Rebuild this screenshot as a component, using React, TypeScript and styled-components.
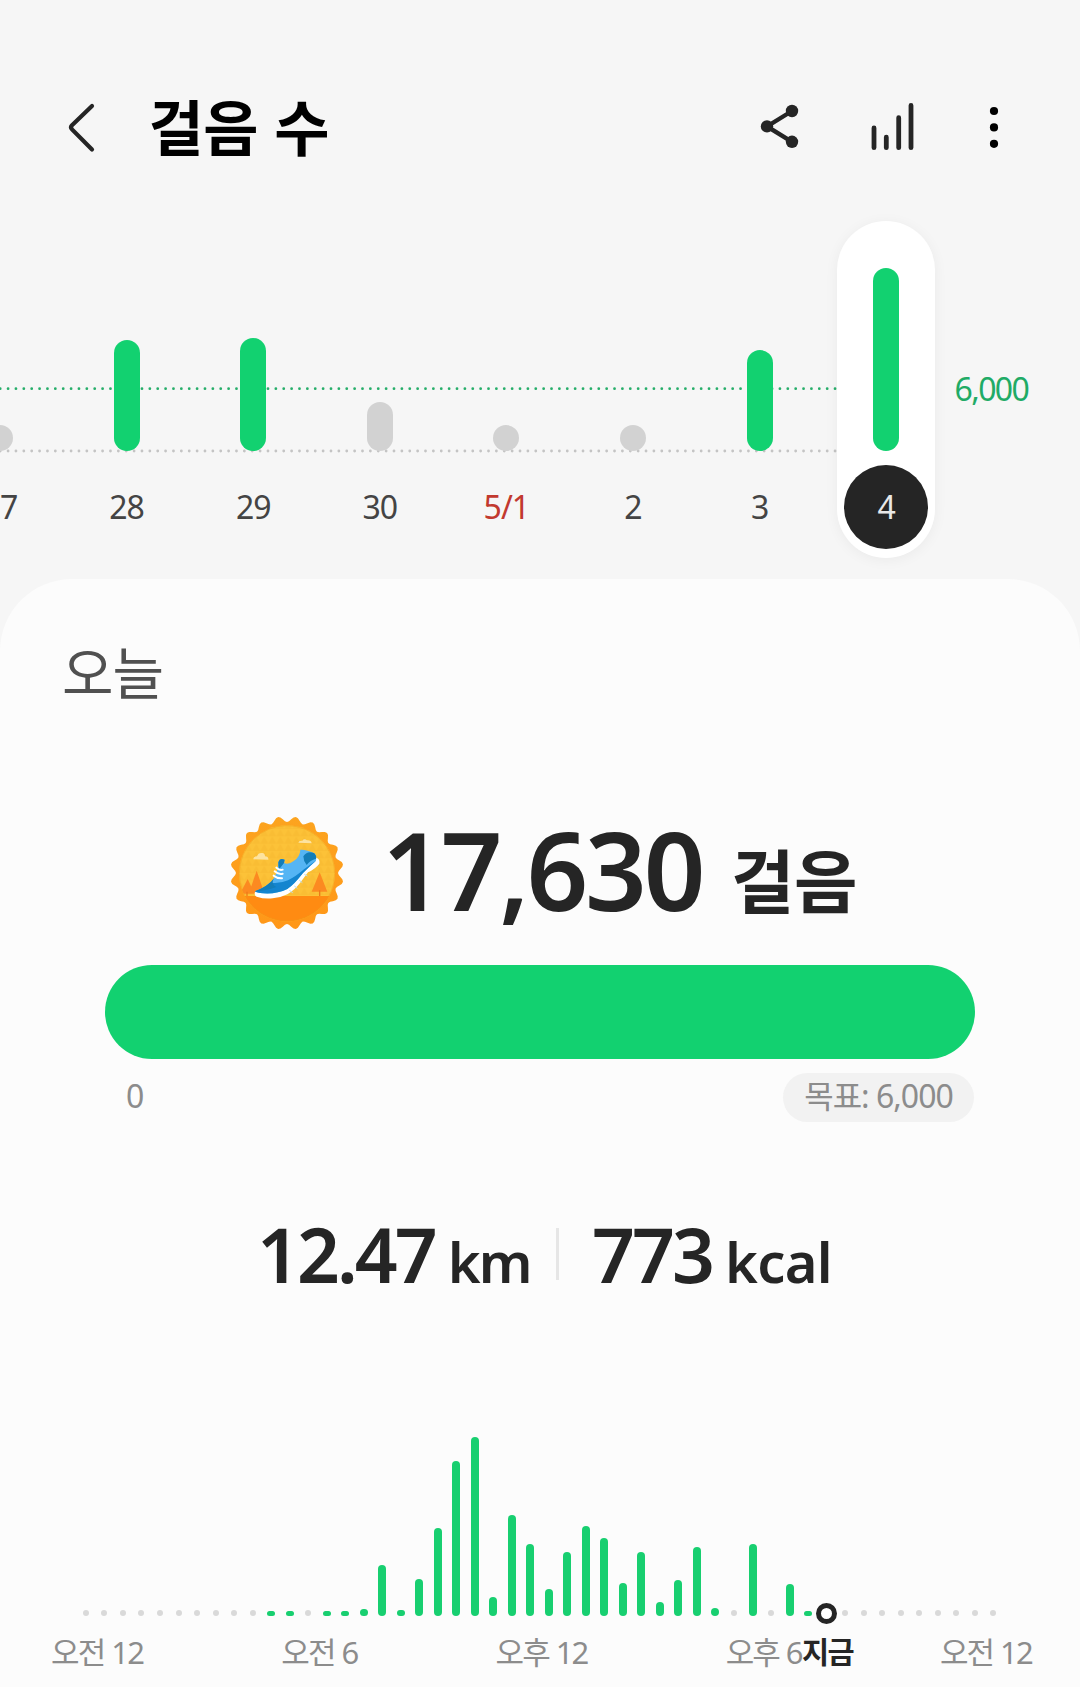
import React from "react";
import styled, { createGlobalStyle } from "styled-components";

const green = "#12d170";
const ink = "#252525";

const GlobalStyle = createGlobalStyle`
  html, body { margin: 0; padding: 0; background: #f6f6f6; }
  * { box-sizing: border-box; }
  body { font-family: "Noto Sans", "Noto Sans CJK KR", sans-serif; color: ${ink}; }
`;

const Screen = styled.main`
  width: 1080px;
  height: 1687px;
  overflow: hidden;
  display: flex;
  flex-direction: column;
  background: #f6f6f6;
`;

const Header = styled.header`
  height: 221px;
  flex: none;
  padding: 91px 64.5px 0 64px;
  display: flex;
  align-items: flex-start;
`;

const IconButton = styled.button<{ $width: number }>`
  width: ${(p) => p.$width}px;
  height: 72px;
  padding: 0;
  border: 0;
  background: none;
  display: flex;
  align-items: center;
  justify-content: center;
`;

const Title = styled.h1`
  margin: -2px auto 0 47.5px;
  font-family: "Noto Sans CJK KR", sans-serif;
  font-size: 60px;
  line-height: 72px;
  font-weight: 700;
  letter-spacing: -0.5px;
  color: #000;
`;

const Actions = styled.div`
  display: flex;
  gap: 54px;
`;

const WeekChart = styled.section`
  position: relative;
  height: 358px;
  flex: none;
  display: flex;
  margin-left: -63.3px;
`;

const GuideLines = styled.svg`
  position: absolute;
  left: 63.3px;
  top: 0;
`;

const Day = styled.div`
  position: relative;
  width: 126.6px;
  flex: none;
  display: flex;
  flex-direction: column;
  align-items: center;
`;

const DayPill = styled.div<{ $selected: boolean }>`
  width: 97.5px;
  height: 337px;
  border-radius: 49px;
  display: flex;
  flex-direction: column;
  align-items: center;
  background: ${(p) => (p.$selected ? "#fff" : "transparent")};
  box-shadow: ${(p) => (p.$selected ? "0 2px 14px rgba(0, 0, 0, 0.05)" : "none")};
`;

const BarSlot = styled.div`
  height: 230px;
  display: flex;
  align-items: flex-end;
`;

const DayBar = styled.div<{ $height: number; $reached: boolean }>`
  width: 26px;
  height: ${(p) => p.$height}px;
  border-radius: 13px;
  background: ${(p) => (p.$reached ? green : "#d2d2d2")};
`;

const DayLabel = styled.span<{ $tone: string; $selected: boolean }>`
  width: 84px;
  height: 84px;
  margin-top: 14px;
  padding-bottom: 2px;
  border-radius: 50%;
  display: flex;
  align-items: center;
  justify-content: center;
  font-size: 32px;
  letter-spacing: -1px;
  color: ${(p) => p.$tone};
  background: ${(p) => (p.$selected ? ink : "transparent")};
`;

const GoalValue = styled.span`
  margin: 145px 0 0 5px;
  height: 46px;
  line-height: 46px;
  font-size: 32px;
  letter-spacing: -1.6px;
  color: #1fab66;
`;

const Card = styled.section`
  flex: 1;
  display: flex;
  flex-direction: column;
  background: #fcfcfc;
  border-radius: 72px 72px 0 0;
`;

const Today = styled.h2`
  margin: 53px 0 0 62px;
  height: 76px;
  font-family: "Noto Sans CJK KR", sans-serif;
  font-size: 56px;
  line-height: 76px;
  font-weight: 400;
  letter-spacing: -1px;
  color: #505050;
`;

const StepSummary = styled.div`
  height: 150px;
  margin: 90px 0 0 229px;
  display: flex;
  align-items: center;
`;

const StepCount = styled.strong`
  margin: -7px 0 0 37px;
  width: 349px;
  font-size: 108px;
  line-height: 150px;
  font-weight: 600;
  letter-spacing: -3.1px;
`;

const StepUnit = styled.span`
  padding-top: 10px;
  font-family: "Noto Sans CJK KR", sans-serif;
  font-size: 69px;
  line-height: 100px;
  font-weight: 700;
  letter-spacing: -0.5px;
`;

const Progress = styled.div`
  width: 870px;
  height: 94px;
  margin: 17px auto 0;
  border-radius: 47px;
  background: ${green};
`;

const ProgressLegend = styled.div`
  width: 870px;
  height: 49px;
  margin: 14px auto 0;
  padding: 0 1px 0 21px;
  display: flex;
  justify-content: space-between;
  font-size: 32px;
  line-height: 46px;
  letter-spacing: -1px;
  color: #8c8c8c;
`;

const GoalChip = styled.span`
  width: 191px;
  height: 49px;
  border-radius: 25px;
  display: flex;
  justify-content: center;
  background: #f2f2f2;
`;

const Metrics = styled.div`
  height: 100px;
  margin: 82px 0 0 257px;
  display: flex;
  align-items: baseline;
  line-height: 100px;
`;

const Metric = styled.div<{ $width: number }>`
  width: ${(p) => p.$width}px;
  white-space: nowrap;
  display: flex;
  align-items: baseline;
`;

const MetricValue = styled.strong`
  font-size: 75px;
  font-weight: 600;
  letter-spacing: -2.9px;
`;

const MetricUnit = styled.span<{ $tracking: number }>`
  margin-left: 13px;
  font-size: 56px;
  font-weight: 600;
  letter-spacing: ${(p) => p.$tracking}px;
`;

const Divider = styled.i`
  align-self: flex-start;
  width: 3px;
  height: 52px;
  margin: 24px 33px 0 0;
  background: #e6e6e6;
`;

const HourChart = styled.div`
  height: 183px;
  margin: 129px 0 0 76.7px;
  display: flex;
  align-items: flex-end;
`;

const HourSlot = styled.div`
  width: 18.53px;
  height: 183px;
  flex: none;
  display: flex;
  flex-direction: column;
  justify-content: flex-end;
  align-items: center;
`;

const HourBar = styled.div<{ $height: number }>`
  width: 8px;
  height: ${(p) => p.$height}px;
  border-radius: 4px;
  background: #18cf70;
`;

const HourDot = styled.div`
  width: 6px;
  height: 6px;
  border-radius: 50%;
  background: #d9d9d9;
`;

const NowRing = styled.div`
  width: 21px;
  height: 21px;
  margin-bottom: -8px;
  flex: none;
  border: 5px solid ${ink};
  border-radius: 50%;
  background: #fff;
`;

const HourLabels = styled.div`
  position: relative;
  width: 981px;
  margin: 13px 0 0 51px;
  display: flex;
  justify-content: space-between;
  font-size: 31px;
  line-height: 46px;
  letter-spacing: -1.8px;
  word-spacing: 0.5px;
  color: #8c8c8c;
`;

const NowLabel = styled.strong`
  position: absolute;
  left: 751px;
  top: 0;
  font-size: 29.5px;
  font-weight: 700;
  letter-spacing: -1.6px;
  color: ${ink};
`;

const days = [
  { label: "27", height: 26 },
  { label: "28", height: 111, reached: true },
  { label: "29", height: 113, reached: true },
  { label: "30", height: 49 },
  { label: "5/1", height: 26, holiday: true },
  { label: "2", height: 26 },
  { label: "3", height: 101, reached: true },
  { label: "4", height: 183, reached: true, selected: true },
];

const NOW = 40;
const halfHours = [
  0, 0, 0, 0, 0, 0, 0, 0, 0, 0, 5.5, 5.5, 0, 5.5, 5.5, 7, 51, 6, 37, 88, 155,
  179, 19, 101, 72, 27, 64, 90, 78, 33, 64, 14, 36, 69, 8, 0, 72, 0, 32.5, 5.5,
  0, 0, 0, 0, 0, 0, 0, 0, 0, 0,
];

const sealOutline = Array.from({ length: 160 }, (_, i) => {
  const angle = (i / 160) * Math.PI * 2;
  const radius = 161.5 - 8.5 * Math.cos(angle * 20);
  return `${(200 + radius * Math.sin(angle)).toFixed(1)},${(220 - radius * Math.cos(angle)).toFixed(1)}`;
}).join(" ");

function BackIcon() {
  return (
    <svg width="37" height="56" viewBox="64 99 37 56" fill="none" stroke={ink} strokeWidth="4.2" strokeLinecap="round" strokeLinejoin="round">
      <path d="M92 106 72 125.2Q70 127.3 72 129.4L92 149.5" />
    </svg>
  );
}

function ShareIcon() {
  return (
    <svg width="48" height="56" viewBox="756 99 48 56" fill={ink} stroke={ink}>
      <path d="M792 111 767 126.4 792 141.8" fill="none" strokeWidth="4.4" />
      <g stroke="none">
        <circle cx="792" cy="111" r="6.2" />
        <circle cx="767" cy="126.4" r="6.2" />
        <circle cx="792" cy="141.8" r="6.2" />
      </g>
    </svg>
  );
}

function ChartIcon() {
  return (
    <svg width="48" height="56" viewBox="869 99 48 56" stroke={ink} strokeWidth="4.8" strokeLinecap="round">
      <path d="M874 128V147.7M886.3 137.2V147.7M898.7 117.7V147.7M911 105.4V147.7" />
    </svg>
  );
}

function MoreIcon() {
  return (
    <svg width="16" height="56" viewBox="986.5 99 16 56">
      <circle cx="994.5" cy="111" r="4.1" />
      <circle cx="994.5" cy="127.4" r="4.1" />
      <circle cx="994.5" cy="143.8" r="4.1" />
    </svg>
  );
}

function StepBadge() {
  return (
    <svg width="116" height="116" viewBox="26 46 348 348">
      <defs>
        <clipPath id="disc"><circle cx="200" cy="221" r="144" /></clipPath>
        <linearGradient id="rim" x1="0" y1="0" x2="0" y2="1">
          <stop offset="0" stopColor="#fca41f" />
          <stop offset="1" stopColor="#ff9718" />
        </linearGradient>
        <pattern id="facets" width="24" height="22" patternUnits="userSpaceOnUse">
          <path d="M0 22 12 0 24 22Z" fill="#f7b62e" opacity=".45" />
        </pattern>
      </defs>
      <polygon points={sealOutline} fill="url(#rim)" />
      <circle cx="200" cy="221" r="144" fill="#fcc238" />
      <g clipPath="url(#disc)">
        <rect x="50" y="70" width="300" height="220" fill="url(#facets)" />
        <path d="M82 238 59 282H103ZM109 213 86 280H132ZM298 218 274 276H321Z" fill="#fc8a21" />
        <path d="M80 276V292M109 276V292M298 272V292" stroke="#ed7a19" strokeWidth="4" />
        <rect x="50" y="289" width="300" height="90" fill="#ff8b12" />
      </g>
      <circle cx="200" cy="221" r="143" fill="none" stroke="#ef9a18" strokeWidth="2" opacity=".6" />
      <path d="M99 179Q98 171 110 170Q114 158 126 160Q134 161 134 170Q145 171 144 180ZM234 129Q235 122 246 123Q252 115 260 122Q273 121 274 131Z" fill="#fde3a0" />
      <path d="M104 277Q101 288 109 291Q132 299 157 296Q182 294 201 284Q222 272 239 250L263 218Q286 207 297 192Q300 178 288 174L230 236 180 270Z" fill="#fff" />
      <path d="M104 275Q144 260 161 236Q175 208 174 188Q179 173 193 180L191 190Q205 196 220 184Q239 172 240 150Q259 149 282 161Q290 169 287 183Q269 198 248 220Q221 255 201 268Q169 284 128 281Q109 280 104 275Z" fill="#55b5f4" />
      <path d="M104 275Q132 265 150 249Q178 253 203 242Q226 231 251 209Q274 191 287 183Q269 198 248 220Q221 255 201 268Q169 284 128 281Q109 280 104 275Z" fill="#1485cf" />
      <path d="M104 275Q144 260 161 236Q150 254 168 262Q137 274 104 275ZM174 188Q178 173 193 180L191 190 177 208Q173 200 174 188ZM249 170Q262 151 282 161Q290 169 287 177Q270 181 259 196Q249 184 249 170Z" fill="#137db8" />
      <path d="M168 204Q177 213 187 210M163 215Q174 225 187 222M160 228Q171 237 185 236" fill="none" stroke="#fff" strokeWidth="6" strokeLinecap="round" />
      <path d="M207 272 217 279M222 259 231 266M237 242 246 249M252 224 261 229" stroke="#b7dcf2" strokeWidth="3" />
    </svg>
  );
}

export default function App() {
  return (
    <Screen lang="ko">
      <GlobalStyle />
      <Header>
        <IconButton $width={37} aria-label="뒤로"><BackIcon /></IconButton>
        <Title>걸음 수</Title>
        <Actions>
          <IconButton $width={66} aria-label="공유"><ShareIcon /></IconButton>
          <IconButton $width={52} aria-label="차트"><ChartIcon /></IconButton>
          <IconButton $width={43} aria-label="더보기"><MoreIcon /></IconButton>
        </Actions>
      </Header>

      <WeekChart>
        <GuideLines width="838" height="240" strokeLinecap="round" strokeDasharray="0 7.876" strokeWidth="2.8">
          <line x1="0.2" x2="837" y1="167.7" y2="167.7" stroke="#27ae6a" />
          <line x1="0.2" x2="837" y1="230" y2="230" stroke="#c4c4c4" />
        </GuideLines>
        {days.map((day) => (
          <Day key={day.label}>
            <DayPill $selected={!!day.selected}>
              <BarSlot><DayBar $height={day.height} $reached={!!day.reached} /></BarSlot>
              <DayLabel
                $selected={!!day.selected}
                $tone={day.selected ? "#e8e8e8" : day.holiday ? "#c2392f" : "#444"}
              >
                {day.label}
              </DayLabel>
            </DayPill>
          </Day>
        ))}
        <GoalValue>6,000</GoalValue>
      </WeekChart>

      <Card>
        <Today>오늘</Today>
        <StepSummary>
          <StepBadge />
          <StepCount>17,630</StepCount>
          <StepUnit>걸음</StepUnit>
        </StepSummary>
        <Progress />
        <ProgressLegend>
          <span>0</span>
          <GoalChip>목표: 6,000</GoalChip>
        </ProgressLegend>
        <Metrics>
          <Metric $width={299}><MetricValue>12.47</MetricValue><MetricUnit $tracking={-2}>km</MetricUnit></Metric>
          <Divider />
          <Metric $width={250}><MetricValue>773</MetricValue><MetricUnit $tracking={-0.7}>kcal</MetricUnit></Metric>
        </Metrics>
        <HourChart>
          {halfHours.map((height, i) => (
            <HourSlot key={i}>
              {i === NOW ? <NowRing /> : height ? <HourBar $height={height} /> : <HourDot />}
            </HourSlot>
          ))}
        </HourChart>
        <HourLabels>
          <span>오전 12</span>
          <span>오전 6</span>
          <span>오후 12</span>
          <span>오후 6</span>
          <span>오전 12</span>
          <NowLabel>지금</NowLabel>
        </HourLabels>
      </Card>
    </Screen>
  );
}
